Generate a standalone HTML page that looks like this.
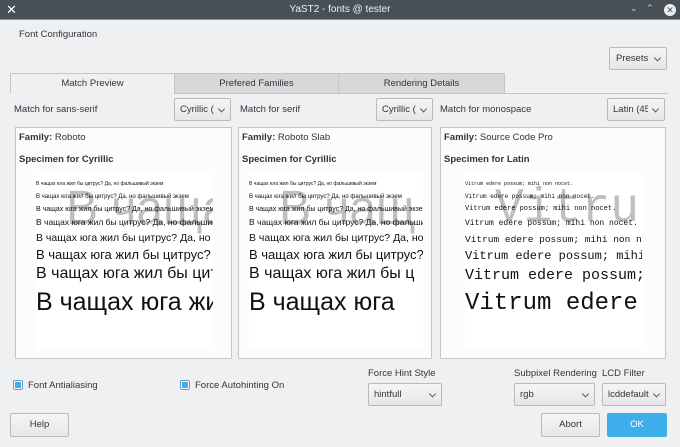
<!DOCTYPE html><html><head><meta charset="utf-8"><style>
*{box-sizing:border-box;margin:0;padding:0}
body{width:680px;height:447px;background:#eff0f1;font-family:"Liberation Sans","DejaVu Sans",sans-serif;font-size:10px;color:#31363b;position:relative;overflow:hidden}
.a{position:absolute;white-space:nowrap}
.tb{left:0;top:0;width:680px;height:20px;background:#475057;color:#eff0f1;font-size:10px;text-align:center;line-height:20px;border-bottom:1px solid #3daee9}
.btn{position:absolute;border:1px solid #b8babd;border-radius:2px;background:linear-gradient(#f4f5f5,#e6e7e8);text-align:center;font-size:9.5px}
.cb{position:absolute;border:1px solid #b8babd;border-radius:2px;background:linear-gradient(#f4f5f5,#e6e7e8);font-size:9.5px;padding-left:5px;overflow:hidden}
.cb span{display:block;overflow:hidden;white-space:nowrap;margin-right:16px}
.cb:after{content:"";position:absolute;right:6px;top:50%;width:4px;height:4px;border-right:1px solid #555;border-bottom:1px solid #555;transform:translateY(-70%) rotate(45deg)}
.tab{position:absolute;top:73px;height:21px;line-height:20px;text-align:center;font-size:9.5px;border:1px solid #c3c5c7;background:#d6d8da}
.panel{position:absolute;top:127px;height:232px;background:#fcfcfc;border:1px solid #c3c5c7}
.spec{position:absolute;top:45px;height:176px;background:#fff;overflow:hidden}
.spec div{position:absolute;left:0;white-space:nowrap;color:#111;line-height:1}
.spec .wm{color:#b4b4b4;opacity:.85}
.chk{position:absolute;width:10px;height:10px;border:1px solid #6a9ec0;background:#3daee9;box-shadow:inset 0 0 0 1px #fff;border-radius:2px}
.m div{font-family:'Liberation Mono',monospace}
</style></head><body>
<div class="a tb">YaST2 - fonts @ tester</div>
<div class="a" style="left:6px;top:2px;color:#fff;font-size:13px">✕</div>
<div class="a" style="left:630px;top:3px;color:#ccc;font-size:9px">⌄</div>
<div class="a" style="left:646px;top:3px;color:#ccc;font-size:9px">⌃</div>
<div class="a" style="left:664px;top:4px;width:12px;height:12px;border-radius:6px;background:#eee;color:#475057;font-size:9px;text-align:center;line-height:12px">✕</div>
<div class="a" style="left:19px;top:29px;font-size:9.5px">Font Configuration</div>
<div class="cb" style="left:609px;top:47px;width:58px;height:23px;line-height:21px;padding-left:6px"><span>Presets</span></div>
<div style="position:absolute;left:10px;top:93px;width:658px;height:1px;background:#c3c5c7"></div>
<div class="tab" style="left:10px;width:165px;background:#eff0f1;border-bottom-color:#eff0f1">Match Preview</div>
<div class="tab" style="left:174px;width:165px">Prefered Families</div>
<div class="tab" style="left:338px;width:167px">Rendering Details</div>
<div class="a" style="left:14px;top:104px;font-size:9.5px">Match for sans-serif</div>
<div class="cb" style="left:174px;top:98px;width:57px;height:23px;line-height:21px"><span>Cyrillic (10</span></div>
<div class="a" style="left:240px;top:104px;font-size:9.5px">Match for serif</div>
<div class="cb" style="left:376px;top:98px;width:57px;height:23px;line-height:21px"><span>Cyrillic (67</span></div>
<div class="a" style="left:440px;top:104px;font-size:9.5px">Match for monospace</div>
<div class="cb" style="left:607px;top:98px;width:58px;height:23px;line-height:21px"><span>Latin (45.</span></div>

<div class="panel" style="left:15px;width:217px">
<div class="a" style="left:3px;top:4px;font-size:9.5px"><b>Family:</b> Roboto</div>
<div class="a" style="left:3px;top:26px;font-size:9.5px;font-weight:bold">Specimen for Cyrillic</div>
<div class="spec" style="left:20px;width:177px">
<div class="wm" style="top:12px;left:30px;font-size:48px">В чаща</div>
<div style="top:8.5px;font-size:5px">В чащах юга жил бы цитрус? Да, но фальшивый экзем</div>
<div style="top:21px;font-size:6px">В чащах юга жил бы цитрус? Да, но фальшивый экзем</div>
<div style="top:32.5px;font-size:7px">В чащах юга жил бы цитрус? Да, но фальшивый экзем</div>
<div style="top:45px;font-size:8.5px">В чащах юга жил бы цитрус? Да, но фальшивый экзе</div>
<div style="top:60px;font-size:10.5px">В чащах юга жил бы цитрус? Да, но фальшиI</div>
<div style="top:74.5px;font-size:13px">В чащах юга жил бы цитрус? Да, но</div>
<div style="top:93px;font-size:16px">В чащах юга жил бы цитру</div>
<div style="top:117px;font-size:25px">В чащах юга жил</div>
</div></div>

<div class="panel" style="left:238px;width:194px">
<div class="a" style="left:3px;top:4px;font-size:9.5px"><b>Family:</b> Roboto Slab</div>
<div class="a" style="left:3px;top:26px;font-size:9.5px;font-weight:bold">Specimen for Cyrillic</div>
<div class="spec" style="left:10px;width:174px">
<div class="wm" style="top:12px;left:30px;font-size:48px">В чащ</div>
<div style="top:8.5px;font-size:5px">В чащах юга жил бы цитрус? Да, но фальшивый экзем</div>
<div style="top:21px;font-size:6px">В чащах юга жил бы цитрус? Да, но фальшивый экзем</div>
<div style="top:32.5px;font-size:7px">В чащах юга жил бы цитрус? Да, но фальшивый экзем</div>
<div style="top:45px;font-size:8.5px">В чащах юга жил бы цитрус? Да, но фальшивый</div>
<div style="top:60px;font-size:10.5px">В чащах юга жил бы цитрус? Да, но фал</div>
<div style="top:74.5px;font-size:13px">В чащах юга жил бы цитрус?</div>
<div style="top:93px;font-size:16px">В чащах юга жил бы ц</div>
<div style="top:117px;font-size:25px">В чащах юга</div>
</div></div>

<div class="panel" style="left:440px;width:226px">
<div class="a" style="left:3px;top:4px;font-size:9.5px"><b>Family:</b> Source Code Pro</div>
<div class="a" style="left:3px;top:26px;font-size:9.5px;font-weight:bold">Specimen for Latin</div>
<div class="spec m" style="left:24px;width:177px">
<div class="wm" style="top:12px;left:30px;font-size:48px">Vitru</div>
<div style="top:8.5px;font-size:5px">Vitrum edere possum; mihi non nocet.</div>
<div style="top:21px;font-size:6px">Vitrum edere possum; mihi non nocet.</div>
<div style="top:33px;font-size:7px">Vitrum edere possum; mihi non nocet.</div>
<div style="top:47px;font-size:8px">Vitrum edere possum; mihi non nocet.</div>
<div style="top:62px;font-size:9.5px">Vitrum edere possum; mihi non nocet</div>
<div style="top:77px;font-size:12px">Vitrum edere possum; mihi nc</div>
<div style="top:95px;font-size:15px">Vitrum edere possum;</div>
<div style="top:119px;font-size:24px">Vitrum edere</div>
</div></div>

<div class="chk" style="left:13px;top:380px"></div>
<div class="a" style="left:28px;top:380px;font-size:9.5px">Font Antialiasing</div>
<div class="chk" style="left:180px;top:380px"></div>
<div class="a" style="left:195px;top:380px;font-size:9.5px">Force Autohinting On</div>
<div class="a" style="left:368px;top:368px;font-size:9.5px">Force Hint Style</div>
<div class="cb" style="left:368px;top:383px;width:74px;height:23px;line-height:21px"><span>hintfull</span></div>
<div class="a" style="left:514px;top:368px;font-size:9.5px">Subpixel Rendering</div>
<div class="cb" style="left:514px;top:383px;width:81px;height:23px;line-height:21px"><span>rgb</span></div>
<div class="a" style="left:602px;top:368px;font-size:9.5px">LCD Filter</div>
<div class="cb" style="left:602px;top:383px;width:64px;height:23px;line-height:21px"><span>lcddefault</span></div>
<div class="btn" style="left:10px;top:413px;width:59px;height:24px;line-height:22px">Help</div>
<div class="btn" style="left:541px;top:413px;width:59px;height:24px;line-height:22px">Abort</div>
<div class="btn" style="left:607px;top:413px;width:60px;height:24px;line-height:22px;background:#3daee9;border-color:#3daee9;color:#fff">OK</div>
</body></html>
